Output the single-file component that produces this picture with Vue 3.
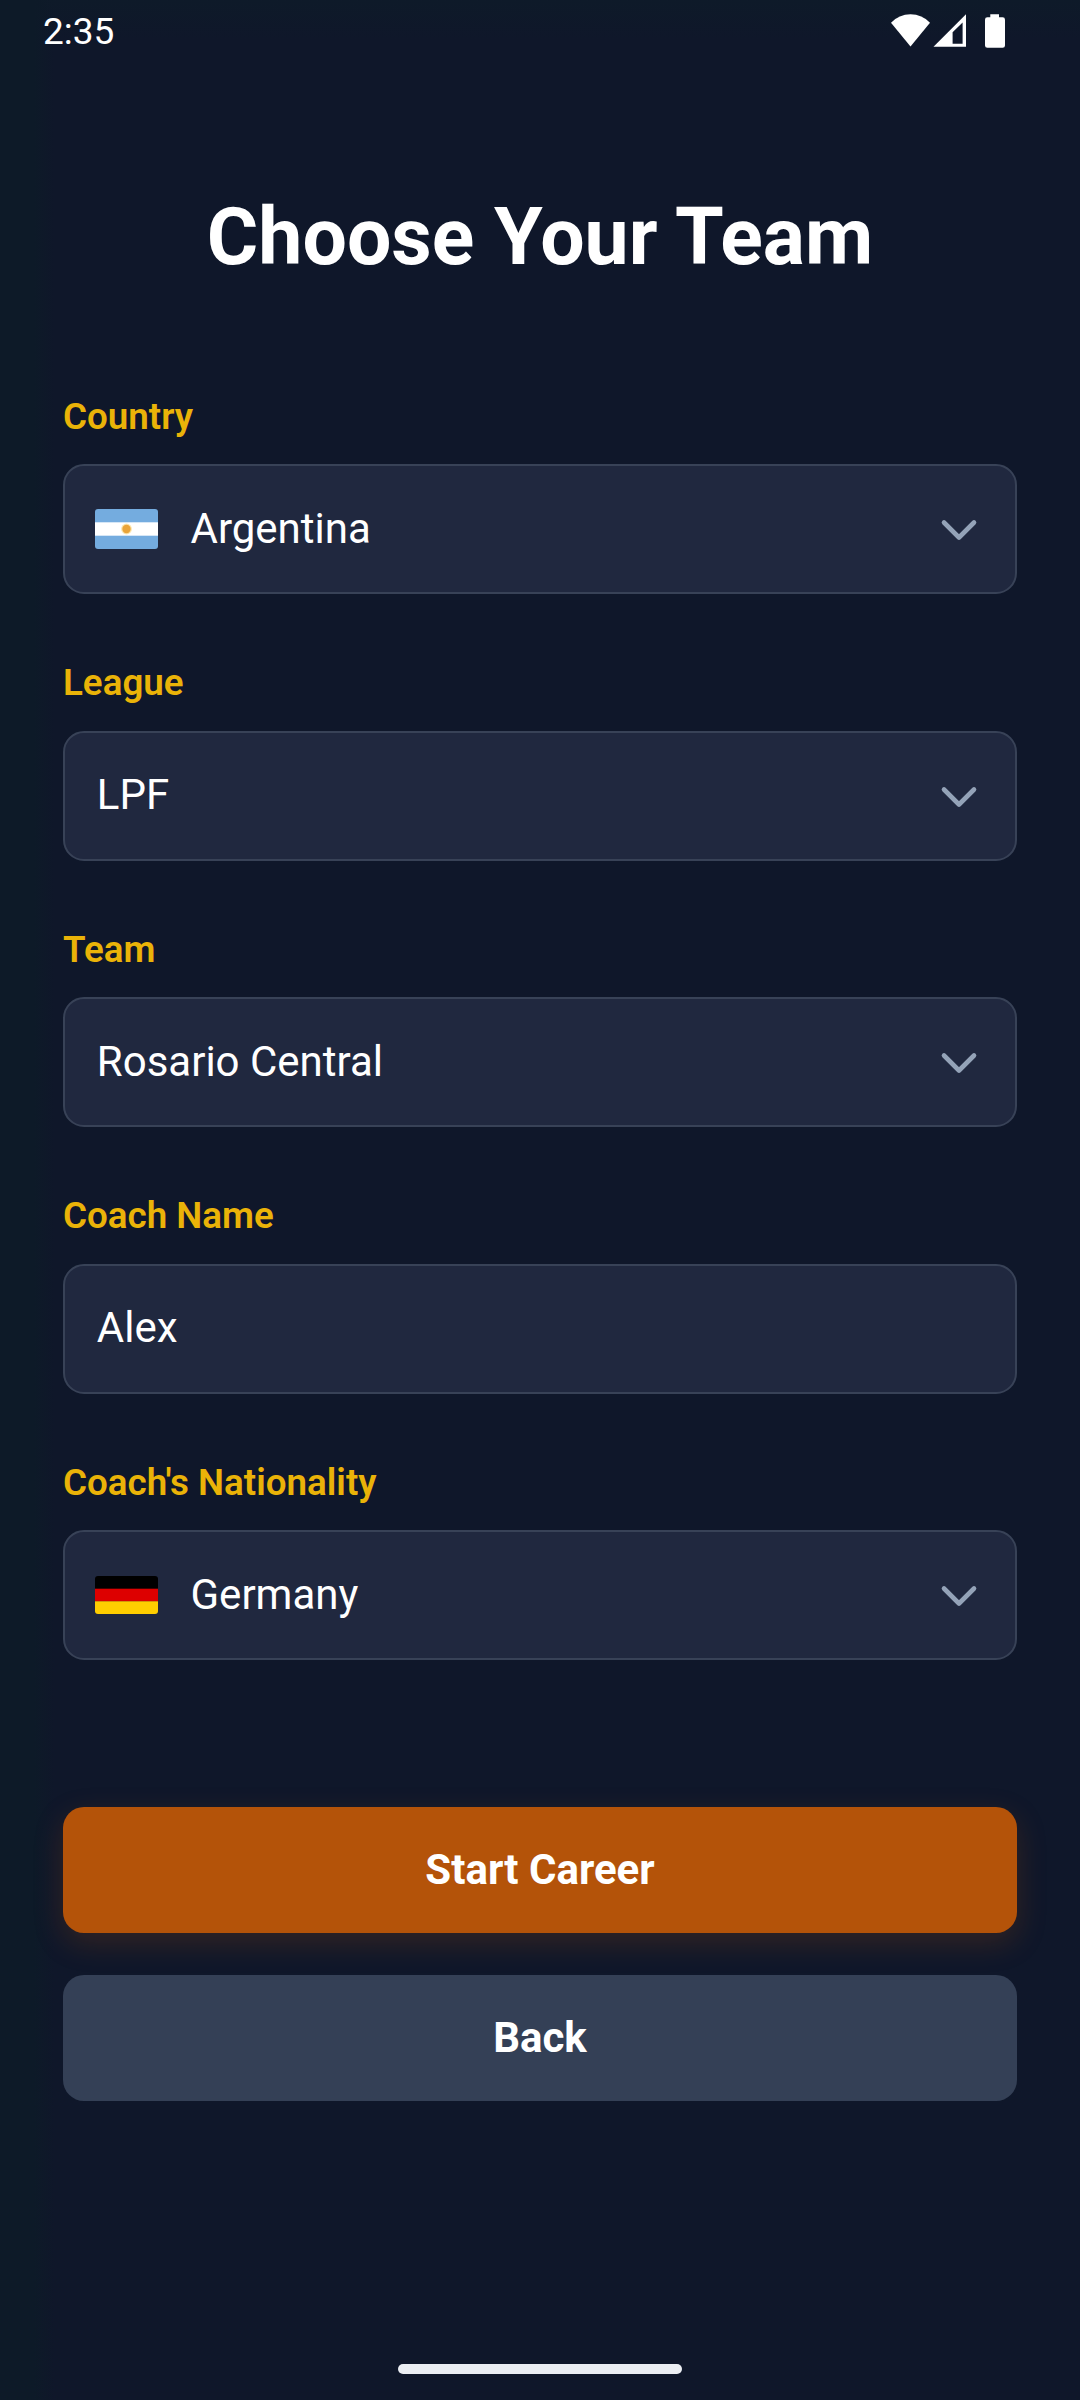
<script setup>
const fields = [
  { id: 'country', label: 'Country', value: 'Argentina', flag: 'ar', select: true },
  { id: 'league', label: 'League', value: 'LPF', select: true },
  { id: 'team', label: 'Team', value: 'Rosario Central', select: true },
  { id: 'coach', label: 'Coach Name', value: 'Alex', select: false },
  { id: 'nation', label: "Coach's Nationality", value: 'Germany', flag: 'de', select: true },
]
</script>

<template>
  <div class="screen">
    <header class="status">
      <span class="clock">2:35</span>
      <svg class="status-icons" width="120" height="40" viewBox="888 10 120 40" fill="#fff">
        <path d="M910.5 46.6 L891 22.7 Q899 14.2 910.5 14.2 Q922 14.2 930 22.7 Z" />
        <path fill-rule="evenodd" d="M933.5 46.7 L966 14.3 V46.7 Z M952.6 43.7 H962.6 V22.4 L952.6 32.2 Z" />
        <path d="M990.3 14.2 H999 V17.3 H1002.6 Q1005 17.3 1005 19.7 V45.4 Q1005 47.8 1002.6 47.8 H987.4 Q985 47.8 985 45.4 V19.7 Q985 17.3 987.4 17.3 H990.3 Z" />
      </svg>
    </header>

    <main class="content">
      <h1 class="title">Choose Your Team</h1>

      <div class="form">
        <div v-for="f in fields" :key="f.id" class="field">
          <div class="label">{{ f.label }}</div>
          <div class="box">
            <svg v-if="f.flag === 'ar'" class="flag" width="63" height="40" viewBox="0 0 63 40">
              <rect width="63" height="40" fill="#74acdf" />
              <rect y="13.3" width="63" height="13.4" fill="#fff" />
              <circle cx="31.5" cy="20" r="5.4" fill="#f6b40e" opacity=".35" />
              <circle cx="31.5" cy="20" r="4.2" fill="#e9a43a" />
            </svg>
            <svg v-if="f.flag === 'de'" class="flag" width="63" height="38" viewBox="0 0 63 38">
              <rect width="63" height="13" fill="#000" />
              <rect y="12.7" width="63" height="12.7" fill="#d00" />
              <rect y="25.3" width="63" height="12.7" fill="#ffce00" />
            </svg>
            <span class="value">{{ f.value }}</span>
            <svg v-if="f.select" class="chevron" width="40" height="26" viewBox="0 0 40 26">
              <path d="M5 5.5 L20 20.5 L35 5.5" fill="none" stroke="#94a3b8" stroke-width="4.6" stroke-linecap="round" stroke-linejoin="round" />
            </svg>
          </div>
        </div>
      </div>

      <div class="actions">
        <button class="btn primary">Start Career</button>
        <button class="btn secondary">Back</button>
      </div>
    </main>

    <footer class="nav"><span class="pill"></span></footer>
  </div>
</template>

<style>
body {
  background: #0f172a;
}
</style>

<style scoped>
.screen {
  box-sizing: border-box;
  width: 1080px;
  height: 2400px;
  display: flex;
  flex-direction: column;
  overflow: hidden;
  font-family: Roboto, sans-serif;
  color: #fff;
  background:
    linear-gradient(90deg, #0d1a28 0, #0d1a28 34px, rgba(13, 26, 40, 0) 54px),
    linear-gradient(180deg, #0e1a29 0, rgba(14, 26, 41, 0) 40px),
    #0f172a;
}
.status {
  flex: none;
  height: 62px;
  display: flex;
  align-items: center;
  justify-content: space-between;
  box-sizing: border-box;
  padding: 0 72px 0 43px;
}
.clock {
  padding-top: 1px;
  font-size: 37px;
  line-height: 62px;
}
.status-icons {
  margin-bottom: 2px;
}
.content {
  flex: 1;
  padding: 127.8px 63px 0;
}
.title {
  margin: 0 0 106.3px;
  text-align: center;
  font-size: 78.75px;
  line-height: 94.5px;
  font-weight: 700;
}
.form {
  display: flex;
  flex-direction: column;
  gap: 63px;
}
.label {
  margin-bottom: 21px;
  font-size: 36.75px;
  line-height: 52.5px;
  font-weight: 600;
  color: #eab308;
}
.box {
  box-sizing: border-box;
  height: 130px;
  display: flex;
  align-items: center;
  padding: 0 36px 0 31.8px;
  border: 2px solid #384257;
  border-radius: 21px;
  background: #20283f;
}
.flag {
  flex: none;
  margin: 0 32.5px 0 -1.8px;
  border-radius: 3px;
}
.value {
  flex: 1;
  padding-bottom: 0.6px;
  font-size: 42px;
  line-height: 56px;
}
.chevron {
  flex: none;
  margin-top: 2px;
}
.actions {
  display: flex;
  flex-direction: column;
  gap: 42px;
  margin-top: 146.9px;
}
.btn {
  height: 126px;
  padding: 0;
  border: 0;
  border-radius: 21px;
  font: 700 42px/63px Roboto, sans-serif;
  color: #fff;
}
.primary {
  background: #b45309;
  box-shadow: 0 10px 30px rgba(180, 83, 9, 0.22);
}
.secondary {
  position: relative;
  background: #344056;
}
.nav {
  flex: none;
  height: 36px;
  display: flex;
  justify-content: center;
}
.pill {
  width: 284px;
  height: 10px;
  border-radius: 5px;
  background: #ebeef3;
}
</style>
